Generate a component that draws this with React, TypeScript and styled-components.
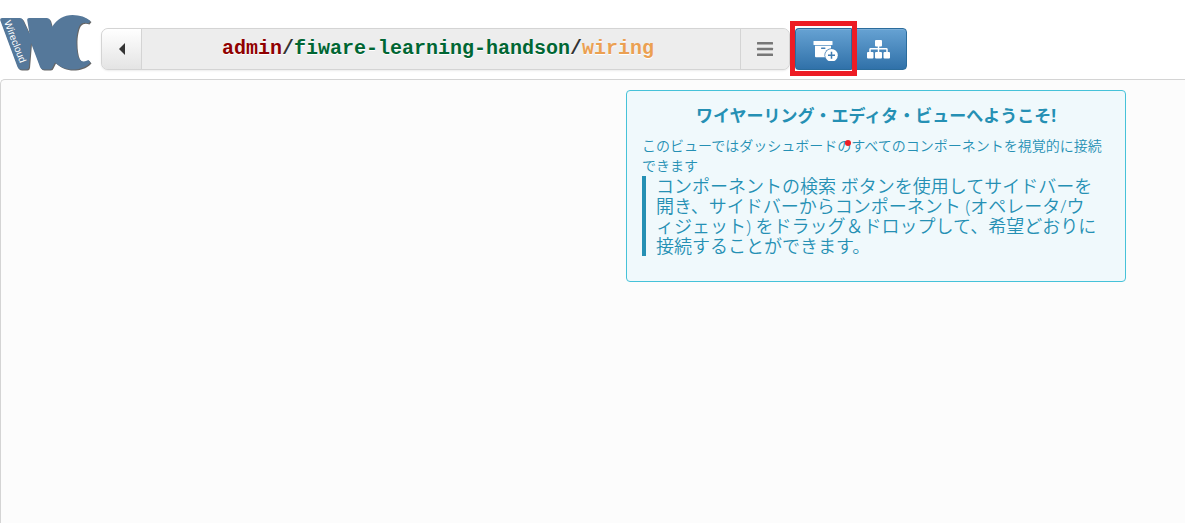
import React from 'react';
import styled, { createGlobalStyle, css } from 'styled-components';

const GlobalStyle = createGlobalStyle`
  *, *::before, *::after { box-sizing: border-box; }
  html, body, #root { height: 100%; }
  body {
    margin: 0;
    background: #fff;
    color: #333;
    font-family: "Open Sans", "Noto Sans CJK JP", sans-serif;
    font-size: 14px;
    line-height: 20px;
  }
`;

const Page = styled.div`
  display: flex;
  flex-direction: column;
  min-height: 100%;
`;

const Header = styled.header`
  display: flex;
  align-items: flex-start;
  padding: 15px 8px 8px 0;
`;

const LogoLink = styled.a`
  flex: none;
  display: block;
  width: 92px;
  height: 56px;
  margin-right: 9px;

  svg { display: block; }
`;

const AddressBar = styled.nav`
  flex: 0 1 689px;
  min-width: 0;
  display: flex;
  height: 42px;
  margin: 13px 5px 0 0;
  border: 1px solid #d4d4d4;
  border-radius: 7px;
  background: #ededed;
  box-shadow: 0 1px 2px rgba(0, 0, 0, 0.08);
  overflow: hidden;
`;

const BarButton = styled.button<{ $side: 'left' | 'right' }>`
  flex: none;
  display: flex;
  align-items: center;
  justify-content: center;
  padding: 0;
  border: 0 solid #d4d4d4;
  cursor: pointer;
  ${({ $side }) =>
    $side === 'left'
      ? css`
          width: 40px;
          border-right-width: 1px;
          background: linear-gradient(#fff, #e4e4e4);
        `
      : css`
          width: 49px;
          border-left-width: 1px;
          background: #ededed;
        `}
`;

const Path = styled.div`
  flex: 1;
  min-width: 0;
  padding-right: 6px;
  overflow: hidden;
  white-space: nowrap;
  text-align: center;
  font: bold 20px/40px "Liberation Mono", monospace;
  text-shadow: 0 1px 0 #fff;
`;

const Crumb = styled.span<{ $color: string }>`
  color: ${({ $color }) => $color};
`;

const Toolbar = styled.div`
  flex: none;
  display: flex;
  margin-top: 13px;
`;

const ToolSlot = styled.div`
  position: relative;
`;

const ToolButton = styled.button<{ $end?: boolean }>`
  display: flex;
  align-items: center;
  justify-content: center;
  width: 56px;
  height: 42px;
  padding: 0;
  border: 1px solid #2b6c9c;
  border-right-width: ${({ $end }) => ($end ? '1px' : '0')};
  border-radius: ${({ $end }) => ($end ? '0 4px 4px 0' : '4px 0 0 4px')};
  background: linear-gradient(#66a2d3, #3071a9);
  box-shadow: inset 0 1px 0 rgba(255, 255, 255, 0.15);
  cursor: pointer;
`;

const Highlight = styled.span`
  position: absolute;
  inset: -7px -6px -6px -5px;
  z-index: 1;
  border: 5px solid #ed1c24;
  pointer-events: none;
`;

const Canvas = styled.main`
  flex: 1;
  padding: 10px 59px 20px 20px;
  border: 1px solid #d4d4d4;
  border-width: 1px 0 0 1px;
  border-radius: 5px 0 0 0;
  background: #fcfcfc;
`;

const Welcome = styled.section`
  max-width: 500px;
  margin-left: auto;
  padding: 15px 15px 25px;
  border: 1px solid #46c2d9;
  border-radius: 4px;
  background: #f0f9fc;
  color: #2590b4;
`;

const Title = styled.h1`
  margin: 0 0 10px;
  font-size: 17px;
  line-height: 20px;
  font-weight: bold;
  text-align: center;
`;

const Text = styled.p`
  margin: 0;
  font-weight: 350;
`;

const Quote = styled.blockquote`
  margin: 0;
  padding-left: 10px;
  border-left: 4px solid #2590b4;
  font-size: 18px;
  line-height: 20px;
  font-weight: 350;
`;

const Marked = styled.span`
  position: relative;
`;

const Dot = styled.span`
  position: absolute;
  top: 4px;
  right: 0;
  width: 6px;
  height: 6px;
  border-radius: 50%;
  background: #ed1c24;
`;

const Logo = () => (
  <svg width="92" height="56" viewBox="0 0 92 56" aria-hidden="true">
    <g fill="#55789a" style={{ filter: 'drop-shadow(1px 1px 0 #666)' }}>
      <path d="M2 3H20Q22 3 23 5L29.5 19L27.2 5Q27 3 29 3H47Q49.500 3 50.200 5.500L52 12C57 4 64 0 72.500 0C80 0 86 2 90.500 6L88.500 8.500Q83 6.500 80 10C75.500 17 75.500 36 79 43.500Q82 48.500 88.500 45L90.500 47.500C85 53 79 54.500 72.500 54.500C66 54.500 60 52 55 47.500L52.500 52.500Q52 54.500 50 54.500H43.500Q41 54.500 40 52L31 28L29 52Q28.500 54.500 26.500 54.500H21Q18.500 54.500 17.500 52L0.300 5.500Q-0.300 3 2 3Z" />
    </g>
    <text
      transform="translate(4 7) rotate(69)"
      fill="#fff"
      fontFamily="Liberation Sans, sans-serif"
      fontSize="10"
    >
      Wirecloud
    </text>
  </svg>
);

const BackIcon = () => (
  <svg width="6" height="12" viewBox="0 0 6 12" aria-hidden="true">
    <path d="M6 0V12L0 6Z" fill="#333" />
  </svg>
);

const MenuIcon = () => (
  <svg width="18" height="16" viewBox="0 0 18 16" aria-hidden="true">
    <g fill="#777">
      <rect x="1" y="1" width="16" height="2.600" rx="0.500" />
      <rect x="1" y="6.700" width="16" height="2.600" rx="0.500" />
      <rect x="1" y="12.400" width="16" height="2.600" rx="0.500" />
    </g>
  </svg>
);

const ArchiveAddIcon = () => (
  <svg width="30" height="24" viewBox="0 0 30 24" aria-hidden="true">
    <rect x="4.500" y="4" width="19" height="4" rx="0.600" fill="#fff" />
    <path d="M6 8.800H22V20.300H7Q6 20.300 6 19.300Z" fill="#fff" />
    <rect x="12" y="10.600" width="4.500" height="1.300" rx="0.600" fill="#4682b8" />
    <circle cx="22.500" cy="18.300" r="7" fill="#4480b5" />
    <circle cx="22.500" cy="18.300" r="6.300" fill="#fff" />
    <path d="M22.500 14.800V21.800M19 18.300H26" stroke="#3f7cb2" strokeWidth="1.500" />
  </svg>
);

const SitemapIcon = () => (
  <svg width="24" height="20" viewBox="0 0 24 20" aria-hidden="true">
    <g fill="#fff">
      <rect x="8" y="1" width="7" height="6.500" rx="1" />
      <rect x="0" y="13" width="6.500" height="6.500" rx="1" />
      <rect x="8" y="13" width="7" height="6.500" rx="1" />
      <rect x="16.500" y="13" width="6.500" height="6.500" rx="1" />
    </g>
    <path
      d="M11.500 7V13M3 13V10.500Q3 9.800 3.700 9.800H19.300Q20 9.800 20 10.500V13"
      fill="none"
      stroke="#fff"
      strokeWidth="1.500"
    />
  </svg>
);

export default function App() {
  return (
    <>
      <GlobalStyle />
      <Page>
        <Header>
          <LogoLink href="#" aria-label="Wirecloud">
            <Logo />
          </LogoLink>
          <AddressBar>
            <BarButton $side="left" type="button" aria-label="Back">
              <BackIcon />
            </BarButton>
            <Path>
              <Crumb $color="#900000">admin</Crumb>/
              <Crumb $color="#006633">fiware-learning-handson</Crumb>/
              <Crumb $color="#eba052">wiring</Crumb>
            </Path>
            <BarButton $side="right" type="button" aria-label="Menu">
              <MenuIcon />
            </BarButton>
          </AddressBar>
          <Toolbar>
            <ToolSlot>
              <ToolButton type="button" aria-label="Find components">
                <ArchiveAddIcon />
              </ToolButton>
              <Highlight />
            </ToolSlot>
            <ToolSlot>
              <ToolButton $end type="button" aria-label="List behaviours">
                <SitemapIcon />
              </ToolButton>
            </ToolSlot>
          </Toolbar>
        </Header>
        <Canvas>
          <Welcome>
            <Title>ワイヤーリング・エディタ・ビューへようこそ!</Title>
            <Text>
              このビューではダッシュボード
              <Marked>
                の<Dot />
              </Marked>
              すべてのコンポーネントを視覚的に接続
              <br />
              できます
            </Text>
            <Quote>
              コンポーネントの検索 ボタンを使用してサイドバーを
              <br />
              開き、サイドバーからコンポーネント (オペレータ/ウ
              <br />
              ィジェット) をドラッグ＆ドロップして、希望どおりに
              <br />
              接続することができます。
            </Quote>
          </Welcome>
        </Canvas>
      </Page>
    </>
  );
}
